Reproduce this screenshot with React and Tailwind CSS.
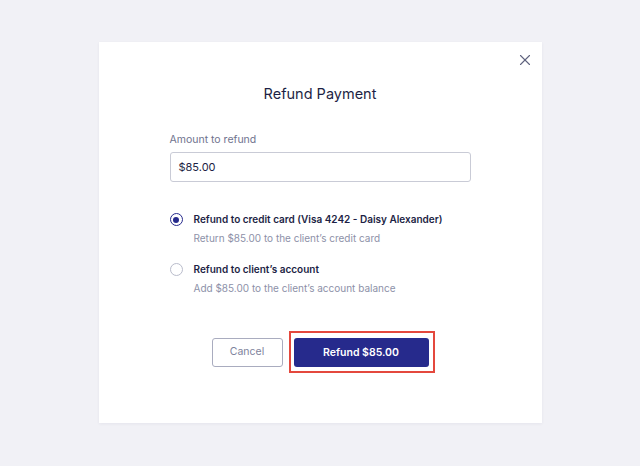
import { X } from "lucide-react"

function Radio({ checked }) {
  return (
    <span
      className={
        "mt-[2px] flex h-[13px] w-[13px] shrink-0 items-center justify-center rounded-full border-[1.5px] " +
        (checked ? "border-[#262a8c]" : "border-[#b9bccb]")
      }
    >
      {checked && <span className="h-[6px] w-[6px] rounded-full bg-[#262a8c]" />}
    </span>
  )
}

function Option({ checked, title, hint }) {
  return (
    <label className="flex gap-[11px]">
      <Radio checked={checked} />
      <div className="flex flex-col gap-[2.5px]">
        <span className="text-[10px] leading-[16px] font-semibold text-[#1d1f45]">{title}</span>
        <span className="text-[10px] leading-[16px] text-[#8d91a8]">{hint}</span>
      </div>
    </label>
  )
}

export default function App() {
  return (
    <div
      className="flex h-[466px] w-[640px] justify-center bg-[#f1f1f6] pt-[42px]"
      style={{ fontFamily: "Inter, 'Noto Sans', sans-serif" }}
    >
      <div className="relative flex h-[381px] w-[443px] flex-col items-center bg-white pt-[42px] shadow-[0_1px_3px_rgba(30,30,80,0.06)]">
        <button className="absolute right-[7px] top-[8px] p-[1px] text-[#5f637e]">
          <X size={18} strokeWidth={1.5} />
        </button>
        <h2 className="text-[14.5px] leading-[20px] text-[#1d1f45]">Refund Payment</h2>

        <div className="mt-[28px] flex w-[301px] flex-col">
          <span className="text-[10.5px] leading-[16px] text-[#6f738e]">Amount to refund</span>
          <div className="mt-[4px] flex h-[30px] items-center rounded-[3px] border border-[#c9cbd6] px-[8px] text-[11px] text-[#1d1f45]">
            $85.00
          </div>

          <div className="mt-[29px] flex flex-col gap-[15.5px]">
            <Option
              checked
              title="Refund to credit card (Visa 4242 - Daisy Alexander)"
              hint="Return $85.00 to the client’s credit card"
            />
            <Option
              title="Refund to client’s account"
              hint="Add $85.00 to the client’s account balance"
            />
          </div>
        </div>

        <div className="mt-[42px] flex gap-[11px]">
          <button className="h-[29px] w-[71px] rounded-[3px] border border-[#a9acbf] text-[10.5px] text-[#7e829c]">
            Cancel
          </button>
          <div className="relative">
            <button className="h-[29px] w-[135px] rounded-[3px] bg-[#262a8c] text-[10.5px] font-semibold text-white">
              Refund $85.00
            </button>
            <span className="pointer-events-none absolute -bottom-[6px] -left-[5px] -right-[6px] -top-[7px] border-2 border-[#e4483d]" />
          </div>
        </div>
      </div>
    </div>
  )
}
